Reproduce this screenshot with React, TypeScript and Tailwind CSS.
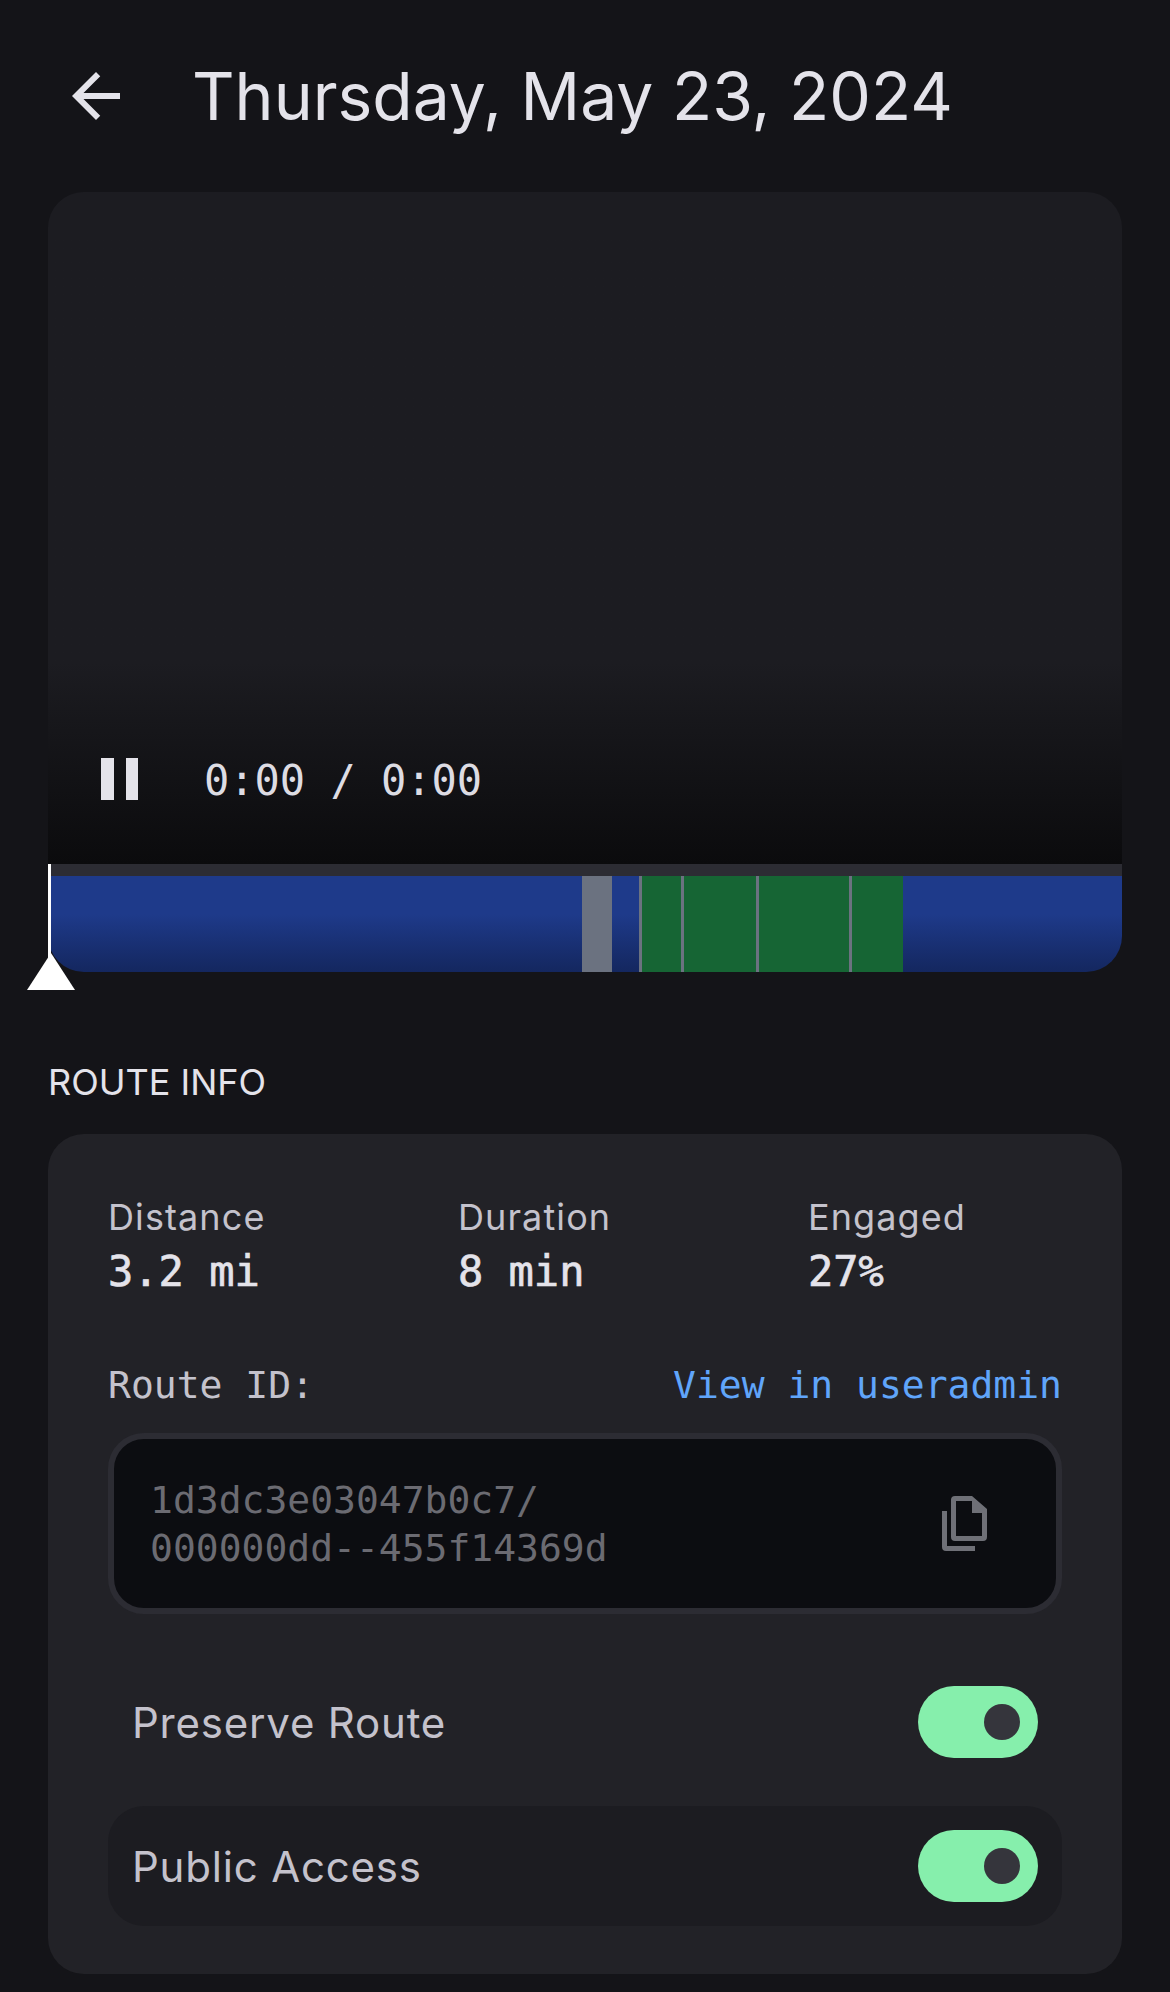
function Toggle() {
  return (
    <div className="flex h-[72px] w-[120px] items-center justify-end rounded-full bg-[#86efac] pr-[18px]">
      <div className="h-9 w-9 rounded-full bg-[#35353c]" />
    </div>
  )
}

function Stat({ label, value }: { label: string; value: string }) {
  return (
    <div>
      <div className="text-[36px] leading-[54px] tracking-[1.1px] text-[#c4c2cc]">{label}</div>
      <div className="mt-px font-['DejaVu_Sans_Mono',monospace] text-[42px] leading-[54px] text-[#e4e3ea] [-webkit-text-stroke:0.7px_#e4e3ea]">{value}</div>
    </div>
  )
}

export default function App() {
  return (
    <div className="min-h-[1992px] bg-[#141418] px-12 font-['Inter',sans-serif]">
      {/* header */}
      <div className="flex h-[192px] items-start pt-[60px] pl-3">
        <svg viewBox="0 0 24 24" className="h-[72px] w-[72px] fill-[#e4e3ea]">
          <path d="M20 11H7.83l5.59-5.59L12 4l-8 8 8 8 1.41-1.41L7.83 13H20v-2z" />
        </svg>
        <h1 className="ml-[60px] text-[66px] leading-[72px] text-[#e4e3ea]">Thursday, May 23, 2024</h1>
      </div>

      {/* video */}
      <div className="flex h-[672px] flex-col justify-end rounded-t-[36px] bg-gradient-to-b from-[#1c1c21] from-70% to-[#0b0b0d] pb-[56px] pl-[53px]">
        <div className="flex items-center">
          <div className="flex h-[42px] w-[37px] justify-between">
            <div className="w-[13px] bg-[#e4e3ea]" />
            <div className="w-3 bg-[#e4e3ea]" />
          </div>
          <div className="mt-1 ml-[66px] font-['DejaVu_Sans_Mono',monospace] text-[42px] leading-[54px] text-[#dddce3]">0:00 / 0:00</div>
        </div>
      </div>

      {/* timeline */}
      <div className="relative">
        <div className="h-3 bg-[#2c2c33]" />
        <div className="flex h-24 overflow-hidden rounded-b-[36px] bg-gradient-to-b from-[#1e3a8a] from-40% to-[#14275f]">
          <div className="w-[534px]" />
          <div className="w-[30px] bg-[#6b7280]" />
          <div className="w-[27px]" />
          <div className="w-[3px] bg-[#6b7280]" />
          <div className="w-[39px] bg-[#166534]" />
          <div className="w-[3px] bg-[#6b7280]" />
          <div className="w-[72px] bg-[#166534]" />
          <div className="w-[3px] bg-[#6b7280]" />
          <div className="w-[90px] bg-[#166534]" />
          <div className="w-[3px] bg-[#6b7280]" />
          <div className="w-[51px] bg-[#166534]" />
        </div>
        <div className="absolute top-0 left-0 h-[96px] w-[3px] bg-white" />
        <svg viewBox="0 0 48 37" className="absolute top-[89px] left-[-21px] h-[37px] w-12 fill-white">
          <path d="M24 0L48 37H0z" />
        </svg>
      </div>

      {/* route info */}
      <h2 className="mt-[86px] text-[36px] leading-[48px] text-[#e4e3ea]">ROUTE INFO</h2>
      <div className="mt-[28px] rounded-[36px] bg-[#222227] px-[60px] pt-[56px] pb-12">
        <div className="grid grid-cols-3 gap-x-24">
          <Stat label="Distance" value="3.2 mi" />
          <Stat label="Duration" value="8 min" />
          <Stat label="Engaged" value="27%" />
        </div>

        <div className="mt-[62px] flex items-center justify-between font-['DejaVu_Sans_Mono',monospace] text-[38px] leading-[48px]">
          <span className="text-[#c4c2cc]">Route ID:</span>
          <span className="text-[#60a5fa]">View in useradmin</span>
        </div>

        <div className="mt-6 flex h-[181px] items-center justify-between rounded-[36px] border-[6px] border-[#2c2c33] bg-[#0c0d11] pr-[69px] pl-9">
          <div className="font-['DejaVu_Sans_Mono',monospace] text-[38px] leading-[48px] text-[#6b6b72]">
            1d3dc3e03047b0c7/
            <br />
            000000dd--455f14369d
          </div>
          <svg viewBox="0 0 45 55" className="h-[55px] w-[45px] fill-[#6f7077]">
            <path
              fillRule="evenodd"
              d="M13 0H30L45 13V41Q45 45 41 45H13Q9 45 9 41V4Q9 0 13 0ZM14 5V40H40V17H30V5Z"
            />
            <path d="M0 15H5V50H33V55H4Q0 55 0 51Z" />
          </svg>
        </div>

        <div className="mt-12 flex flex-col gap-6">
          <div className="flex h-[120px] items-center justify-between px-6">
            <span className="text-[42px] tracking-[0.8px] text-[#c4c2cc]">Preserve Route</span>
            <Toggle />
          </div>
          <div className="flex h-[120px] items-center justify-between rounded-[36px] bg-[#1c1c21] px-6">
            <span className="text-[42px] tracking-[0.8px] text-[#c4c2cc]">Public Access</span>
            <Toggle />
          </div>
        </div>
      </div>
    </div>
  )
}
